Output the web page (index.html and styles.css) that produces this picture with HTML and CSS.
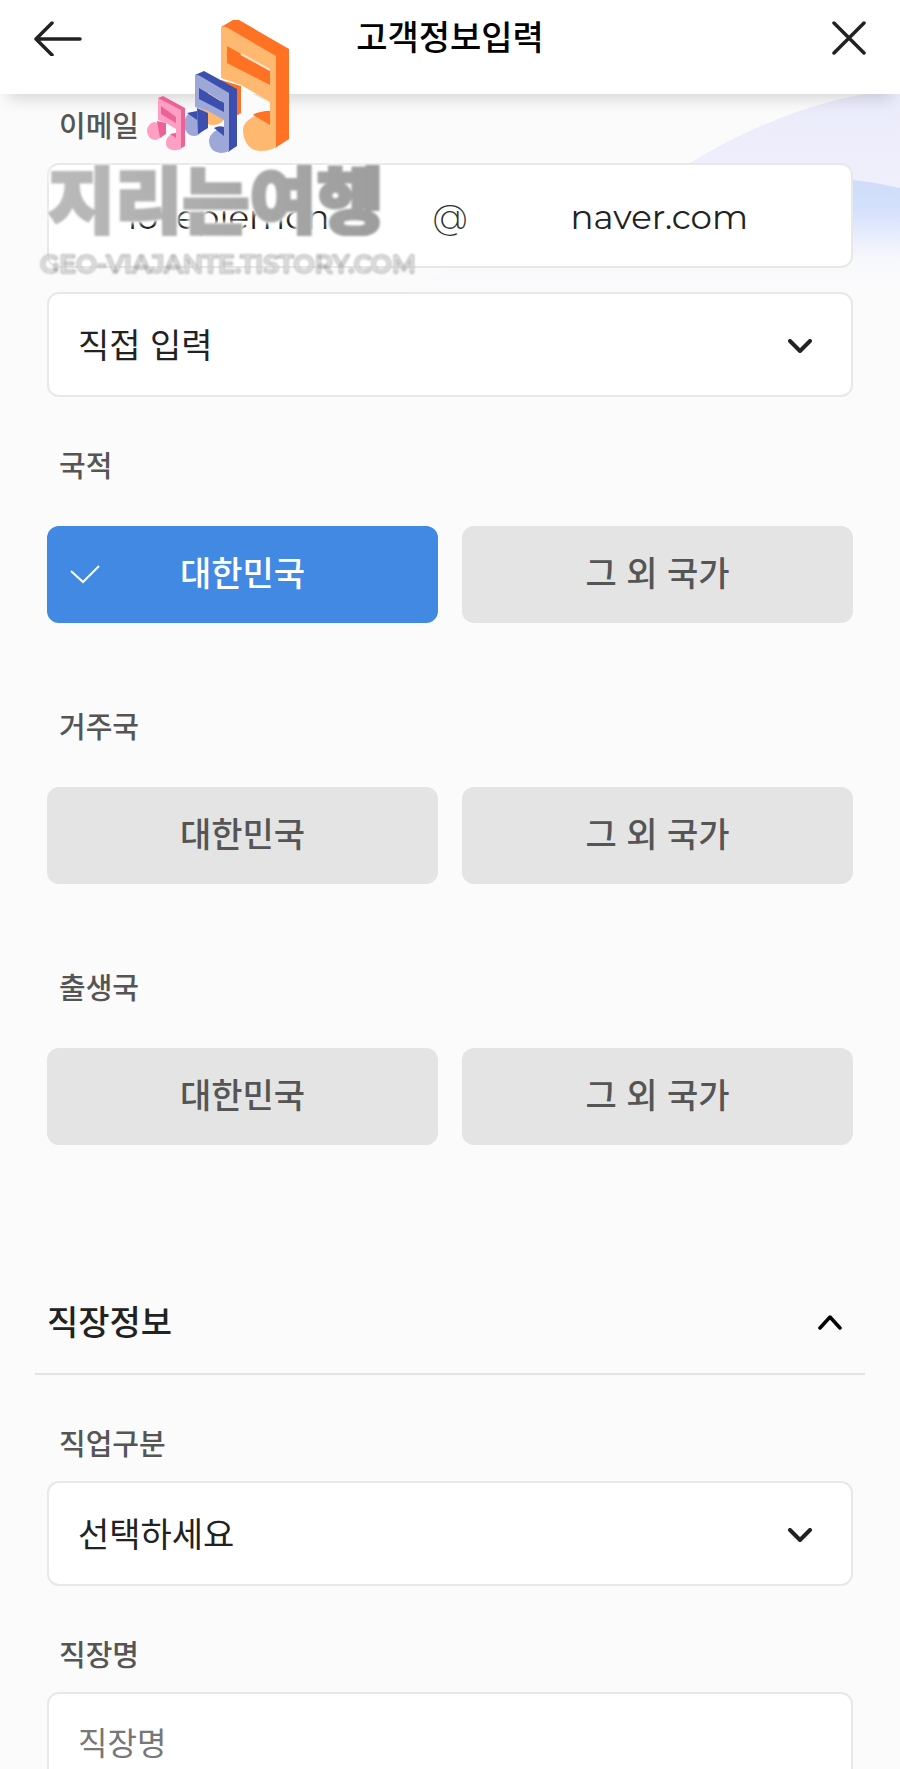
FILE: index.html
```html
<!DOCTYPE html>
<html lang="ko">
<head>
  <meta charset="UTF-8">
  <title>고객정보입력</title>
  <meta name="viewport" content="width=device-width,initial-scale=1">
  <link rel="stylesheet" href="styles.css">
</head>
<body>
  <header class="header">
    <button class="icon-btn" type="button" aria-label="뒤로">
      <svg width="48" height="36" viewBox="0 0 48 36"><path d="M46 19H2M18 3L2 19l16 16" /></svg>
    </button>
    <h1 class="title">고객정보입력</h1>
    <button class="icon-btn close" type="button" aria-label="닫기">
      <svg width="34" height="36" viewBox="0 0 34 36"><path d="M2 3l30 30M32 3L2 33" /></svg>
    </button>
  </header>

  <!-- 배경 물결 -->
  <svg class="wave" width="500" height="210" viewBox="0 0 500 210" aria-hidden="true">
    <defs>
      <linearGradient id="lilac" x1="0" y1="0" x2="0" y2="1">
        <stop offset="0" stop-color="#eaebfb" />
        <stop offset=".6" stop-color="#f0effc" />
        <stop offset="1" stop-color="#fbfbfb" />
      </linearGradient>
      <linearGradient id="blue" x1="0" y1="0" x2="0" y2="1">
        <stop offset="0" stop-color="#cddcfa" />
        <stop offset=".3" stop-color="#d5e1fb" />
        <stop offset=".7" stop-color="#f7f8fb" />
        <stop offset="1" stop-color="#fbfbfb" />
      </linearGradient>
    </defs>
    <path d="M290 69Q380 14 470-1L500-6V160H180Z" fill="url(#lilac)" />
    <path d="M0 200Q250 60 440 85Q470 87 500 94V200Z" fill="url(#blue)" />
  </svg>

  <main class="form">
    <section class="group">
      <label class="label" for="email-id">이메일</label>
      <div class="field email">
        <input class="email-input id" id="email-id" type="text" value="lovepiemon">
        <span class="at">@</span>
        <input class="email-input" type="text" value="naver.com" aria-label="이메일 도메인">
      </div>
      <div class="select-wrap second">
        <select class="field" aria-label="도메인 선택">
          <option>직접 입력</option>
        </select>
        <svg class="arrow" width="24" height="16" viewBox="0 0 24 16"><path d="M2 2l10 10L22 2" /></svg>
      </div>
    </section>

    <section class="group choice">
      <h2 class="label">국적</h2>
      <div class="choices">
        <button class="choice-btn on" type="button" aria-pressed="true">
          <svg class="check" width="30" height="20" viewBox="0 0 30 20"><path d="M1 7l12 11L29 2" /></svg>
          대한민국
        </button>
        <button class="choice-btn" type="button">그 외 국가</button>
      </div>
    </section>

    <section class="group choice">
      <h2 class="label">거주국</h2>
      <div class="choices">
        <button class="choice-btn" type="button">대한민국</button>
        <button class="choice-btn" type="button">그 외 국가</button>
      </div>
    </section>

    <section class="group choice">
      <h2 class="label">출생국</h2>
      <div class="choices">
        <button class="choice-btn" type="button">대한민국</button>
        <button class="choice-btn" type="button">그 외 국가</button>
      </div>
    </section>

    <div class="section-head">
      <h2 class="section-title">직장정보</h2>
      <button class="icon-btn fold" type="button" aria-label="접기">
        <svg width="24" height="16" viewBox="0 0 24 16"><path d="M2 14L12 3l10 11" /></svg>
      </button>
    </div>

    <section class="group">
      <label class="label" for="job">직업구분</label>
      <div class="select-wrap">
        <select class="field" id="job">
          <option>선택하세요</option>
        </select>
        <svg class="arrow" width="24" height="16" viewBox="0 0 24 16"><path d="M2 2l10 10L22 2" /></svg>
      </div>
    </section>

    <section class="group">
      <label class="label" for="company">직장명</label>
      <input class="field" id="company" type="text" placeholder="직장명">
    </section>
  </main>

  <!-- 블로그 워터마크 -->
  <div class="watermark">
    <svg class="notes" width="150" height="138" viewBox="144 18 150 138" aria-hidden="true">
      <!-- 주황 음표 -->
      <ellipse cx="213" cy="113" rx="13" ry="12" fill="#ffb870" />
      <path d="M221 80l20 6v27l-8 5-12-4z" fill="#ff7224" />
      <path d="M221 27l12-7h6l50 29v90l-14 9-6-90z" fill="#ff7224" />
      <path d="M221 28q2-3 7 0l48 28v91q-6 4-16 4c-12 0-17-12-17-21 0-10 14-16 27-19v-9l-29-17-20-7z" fill="#ffb870" />
      <path d="M227 46l43 24v15l-43-22zM253 115q6-5 17-4v14z" fill="#ff7224" />
      <path d="M241 54l29 16" stroke="#ffe2c8" stroke-width="2" />
      <path d="M241 88l29 15v7l-14 3-15 1z" fill="#fbfbfb" />
      <!-- 파랑 음표 -->
      <ellipse cx="194" cy="124" rx="10" ry="12" fill="#9da8d8" />
      <path d="M187 113l10-2v9zM197 108l11 5v15l-10 6z" fill="#3d4fae" />
      <path d="M195 75l9-4 33 18v57l-9 6-5-50z" fill="#3d4fae" />
      <path d="M195 76q2-2 5 0l29 17v58q-4 2-8 2-12-1-12-13 1-9 15-13v-7l-16-9-13-4z" fill="#9da8d8" />
      <path d="M199 88l25 15v9l-25-13zM214 128q5-3 10-1v9z" fill="#3d4fae" />
      <path d="M208 93l13 8" stroke="#d5b9b9" />
      <!-- 분홍 음표 -->
      <ellipse cx="155" cy="131" rx="8" ry="9" fill="#ff9fc4" />
      <path d="M157 121l9 2v11l-6 4z" fill="#ec6196" />
      <path d="M158 98l5-2 22 12v38l-5 3-5-34z" fill="#ec6196" />
      <path d="M158 98l23 12v39q-5 2-9 1-7-2-6-9 2-7 10-8v-4l-10-6-8-3z" fill="#ff9fc4" />
      <path d="M161 106l15 11v6l-15-9zM170 134l6-1v5z" fill="#ec6196" />
    </svg>
    <div class="wm-name">지리는여행</div>
    <div class="wm-url">GEO-VIAJANTE.TISTORY.COM</div>
  </div>
</body>
</html>
```

FILE: styles.css
```css
* {
  box-sizing: border-box;
}
body {
  position: relative;
  margin: 0;
  min-height: 100vh;
  background: #fbfbfb;
  color: #222;
  font-family: 'Noto Sans CJK KR', sans-serif;
  font-size: 34px;
  overflow-x: hidden;
}
h1, h2 {
  margin: 0;
  font-weight: 500;
}
svg {
  display: block;
  fill: none;
}
button, input, select {
  font-family: inherit;
  color: inherit;
}

/* 상단바 */
.header {
  position: relative;
  z-index: 2;
  display: grid;
  grid-template-columns: 1fr auto 1fr;
  align-items: center;
  height: 94px;
  padding: 0 34px 18px;
  background: #fff;
  box-shadow: 0 12px 16px -8px rgba(0, 0, 0, 0.16);
}
.title {
  padding-bottom: 4px;
  font-size: 34px;
  line-height: 48px;
  color: #000;
}
.icon-btn {
  justify-self: start;
  padding: 0;
  border: 0;
  background: none;
  stroke: #222;
  stroke-width: 3.5;
  stroke-linecap: round;
  stroke-linejoin: round;
  cursor: pointer;
}
.close {
  justify-self: end;
}
.wave {
  position: absolute;
  top: 94px;
  right: 0;
}

/* 입력 폼 */
.form {
  position: relative;
  padding: 12px 47px 40px;
}
.group {
  margin-bottom: 49px;
}
.label {
  display: block;
  margin-bottom: 21px;
  padding-left: 12px;
  font-size: 29px;
  font-weight: 500;
  line-height: 36px;
  color: #555;
}
.field {
  display: block;
  width: 100%;
  height: 105px;
  padding: 0 29px 2px;
  border: 2px solid #e8e8e8;
  border-radius: 12px;
  background: #fff;
  font-size: 34px;
  outline: none;
  appearance: none;
}
input.field {
  padding-bottom: 8px;
}
.field::placeholder {
  font-size: 32px;
  color: #777;
  opacity: 1;
}
.email {
  display: grid;
  grid-template-columns: 1fr auto 1fr;
  align-items: center;
  padding: 2px 0 0;
  font-family: Montserrat, Inter, 'Noto Sans CJK KR', sans-serif;
}
.email-input {
  min-width: 0;
  padding: 0;
  border: 0;
  background: none;
  font-size: 34px;
  text-align: center;
  outline: none;
}
.email-input.id {
  padding-right: 24px;
}
.at {
  font-weight: 300;
  color: #333;
}
.select-wrap {
  position: relative;
}
.second {
  margin-top: 24px;
}
.arrow {
  position: absolute;
  top: 47px;
  right: 41px;
  stroke: #222;
  stroke-width: 4;
  stroke-linecap: round;
  stroke-linejoin: round;
  pointer-events: none;
}

/* 국가 선택 */
.choice {
  margin-bottom: 84px;
}
.choice .label {
  margin-bottom: 44px;
}
.choices {
  display: grid;
  grid-template-columns: 1fr 1fr;
  gap: 24px;
}
.choice-btn {
  position: relative;
  height: 97px;
  padding: 0 0 6px;
  border: 0;
  border-radius: 12px;
  background: #e4e4e4;
  color: #555;
  font-size: 34px;
  font-weight: 500;
  cursor: pointer;
}
.choice-btn.on {
  background: #4189e2;
  color: #fff;
}
.check {
  position: absolute;
  top: 38px;
  left: 23px;
  stroke: #fff;
  stroke-width: 2;
}

.section-head {
  display: flex;
  align-items: center;
  justify-content: space-between;
  margin: 152px -12px 49px;
  padding: 0 11px 28px 12px;
  border-bottom: 2px solid #e4e4e4;
}
.section-title {
  font-size: 34px;
  line-height: 48px;
}
.fold {
  padding: 2px 12px 0;
  stroke: #000;
}

/* 워터마크 */
.watermark {
  position: absolute;
  top: 18px;
  left: 40px;
  z-index: 3;
  pointer-events: none;
}
.notes {
  margin-left: 104px;
}
.wm-name {
  padding-left: 8px;
  background: linear-gradient(90deg, #bbb, #9a9a9a);
  -webkit-background-clip: text;
  background-clip: text;
  font-size: 73px;
  font-weight: 900;
  line-height: 80px;
  color: transparent;
  -webkit-text-stroke: 3px transparent;
  filter: blur(1px) drop-shadow(0 0 2px #fff) drop-shadow(0 0 2px #fff);
}
.wm-url {
  margin-top: 12px;
  font-family: Montserrat, Inter, sans-serif;
  font-size: 25px;
  font-weight: 600;
  line-height: 32px;
  color: #f4f4f4;
  -webkit-text-stroke: 1px #999;
  filter: blur(1px);
}
```
